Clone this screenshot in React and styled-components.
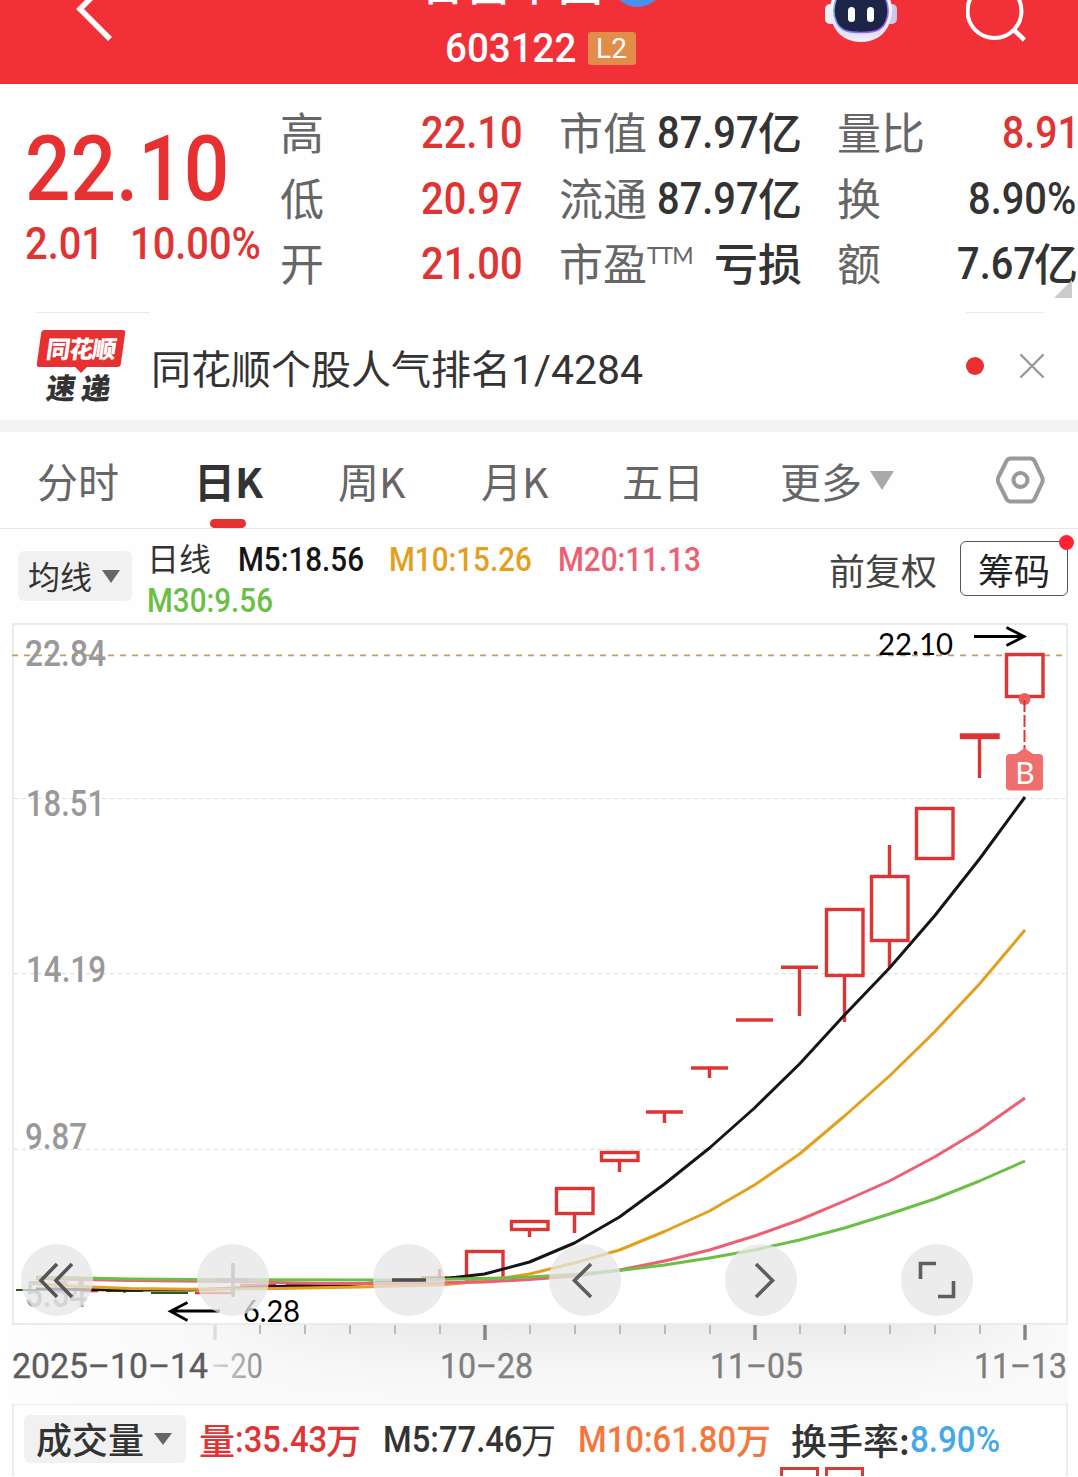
import styled, { createGlobalStyle } from 'styled-components'


const GlobalStyle = createGlobalStyle`
    * {
        box-sizing: border-box;
    }
    body {
        margin: 0;
        background-color: #fefefe;
        font-family: "Noto Sans CJK SC", "Noto Sans", sans-serif;
        color: #333333;
        overflow: hidden;
    }
`

const Page = styled.div`
    width: 1078px;
    height: 1477px;
    overflow: hidden;
`

const Row = styled.div`
    display: flex;
    align-items: center;
`

/* condensed digits: $w is the drawn width, $k the horizontal squeeze */
const Num = styled.span`
    display: block;
    width: ${p => p.$w}px;
    flex: none;
    font-family: Roboto, "Noto Sans", sans-serif;
    font-size: ${p => p.$size || 45}px;
    font-weight: ${p => p.$weight || 500};
    line-height: 1;
    color: ${p => p.$color || '#333333'};
    white-space: nowrap;
    transform: scaleX(${p => p.$k || 0.885});
    transform-origin: left center;
`

const Cn = styled.span`
    display: block;
    font-size: ${p => p.$size || 44}px;
    font-weight: ${p => p.$weight || 400};
    line-height: 1;
    margin-bottom: 3px;
    color: ${p => p.$color || '#666666'};
    white-space: nowrap;
`

/* ---------- header ---------- */

const Header = styled.div`
    height: 84px;
    display: grid;
    grid-template-columns: 424px 232px 1fr;
    background-color: #f23037;
    overflow: hidden;
`

const HeaderLeft = styled.div`
    padding-left: 72px;
`

const HeaderCenter = styled.div`
    display: flex;
    flex-direction: column;
    align-items: center;
`

const TitleRow = styled.div`
    display: flex;
    width: 232px;
    height: 46px;
    margin-top: -41px;
    flex: none;
`

const Title = styled.div`
    font-size: 45px;
    line-height: 46px;
    letter-spacing: 1px;
    margin-left: -4px;
    font-weight: 500;
    color: #ffffff;
    white-space: nowrap;
`

const Verified = styled.div`
    width: 53px;
    height: 53px;
    border-radius: 50%;
    margin: -5px 0 0 7px;
    background-color: #4a90f0;
    flex: none;
`

const CodeRow = styled.div`
    display: flex;
    align-items: center;
    gap: 13px;
    height: 36px;
    margin-top: 25px;
`

const LevelTag = styled.div`
    width: 48px;
    height: 33px;
    border-radius: 3px;
    background-color: #e28d49;
    color: #ffffff;
    font-family: Roboto, sans-serif;
    font-size: 28px;
    line-height: 34px;
    text-align: center;
`

const HeaderRight = styled.div`
    display: flex;
    padding-left: 168px;
    gap: 68px;
`

/* ---------- quote ---------- */

const Quote = styled.div`
    height: 228px;
    display: grid;
    grid-template-columns: 280px 279px 278px 241px;
    position: relative;
`

const PriceBlock = styled.div`
    padding: 41px 0 0 25px;
`

const PriceSub = styled.div`
    display: flex;
    gap: 30px;
    margin-top: 6px;
`

const StatCol = styled.div`
    display: flex;
    flex-direction: column;
    padding: 16px ${p => p.$right}px 0 0;
`

const StatRow = styled.div`
    display: flex;
    align-items: center;
    justify-content: space-between;
    height: 65.6px;
`

const Sup = styled.span`
    font-family: Lato, "Open Sans", sans-serif;
    font-size: 23px;
    line-height: 24px;
    letter-spacing: -1px;
    color: #666666;
    margin: -17px auto 0 0;
`

const Corner = styled.div`
    position: absolute;
    right: 6px;
    bottom: 14px;
    border-left: 18px solid transparent;
    border-bottom: 18px solid #cccccc;
`

/* ---------- news ---------- */

const News = styled.div`
    height: 108px;
    display: flex;
    align-items: flex-start;
    padding: 0 34px 0 36px;
`

const NewsLogo = styled.div`
    width: 114px;
    height: 108px;
    border-top: 1px solid #ebebeb;
    padding: 17px 0 0 1px;
    flex: none;
`

const NewsText = styled.div`
    flex: 1;
    font-size: 40px;
    line-height: 40px;
    padding: 35px 0 0 1px;
    color: #333333;
    white-space: nowrap;
`

const Rank = styled.span`
    font-family: Roboto, sans-serif;
    font-size: 41px;
`

const NewsActions = styled.div`
    width: 78px;
    height: 107px;
    border-top: 1px solid #ebebeb;
    display: flex;
    align-items: center;
    justify-content: space-between;
`

const RedDot = styled.div`
    width: 18px;
    height: 18px;
    border-radius: 50%;
    background-color: #e63031;
`

const LogoTop = styled.div`
    width: 84px;
    height: 37px;
    margin-left: 2px;
    border-radius: 3px;
    background-color: #e63031;
    transform: skewX(-8deg);
    color: #ffffff;
    font-size: 24px;
    font-weight: 900;
    line-height: 36px;
    letter-spacing: -1px;
    text-align: center;
`

const LogoTail = styled.div`
    width: 0;
    margin-left: 38px;
    border: 6px solid transparent;
    border-top-color: #e63031;
    border-bottom: 0;
`

const LogoBottom = styled.div`
    display: flex;
    gap: 6px;
    margin: -3px 0 0 10px;
    font-size: 29px;
    line-height: 32px;
    font-weight: 900;
    transform: skewX(-8deg);
`

const Divider = styled.div`
    height: 12px;
    background-color: #f4f4f4;
`

/* ---------- tabs ---------- */

const Tabs = styled.div`
    height: 97px;
    display: grid;
    grid-template-columns: 157px 144px 143px 141px 158px 216px 1fr;
    padding-left: 37px;
    border-bottom: 1px solid #e6e6e6;
`

const Tab = styled.div`
    display: flex;
    flex-direction: column;
    padding-top: 20px;
    font-size: 41px;
    line-height: 56px;
    font-weight: ${p => (p.$active ? 700 : 400)};
    color: ${p => (p.$active ? '#333333' : '#666666')};
    white-space: nowrap;
`

const TabLine = styled.div`
    width: 36px;
    height: 9px;
    border-radius: 5px;
    margin: 11px 0 0 16px;
    background-color: #e63031;
`

const Caret = styled.i`
    display: block;
    flex: none;
    border-left: ${p => p.$w / 2}px solid transparent;
    border-right: ${p => p.$w / 2}px solid transparent;
    border-top: ${p => p.$h}px solid ${p => p.$color || '#666666'};
`

const SettingCell = styled.div`
    padding-top: 24px;
`

/* ---------- average bar ---------- */

const AvgBar = styled.div`
    height: 94px;
    display: flex;
    align-items: flex-start;
    padding-left: 18px;
`

const Pill = styled.div`
    display: flex;
    align-items: center;
    gap: 10px;
    width: ${p => p.$w}px;
    height: ${p => p.$h}px;
    margin-top: ${p => p.$top}px;
    padding-left: ${p => p.$pad}px;
    border-radius: 6px;
    background-color: #f1f1f1;
    flex: none;
`

const AvgList = styled.div`
    display: flex;
    flex-wrap: wrap;
    align-content: flex-start;
    width: 697px;
    padding: 9px 0 0 15px;
    column-gap: 26.500px;
    flex: none;
`

const AvgItem = styled.div`
    height: 41px;
    display: flex;
    align-items: center;
`

/* keeps the second line of averages off the first one's right side */
const LineBreak = styled.div`
    flex-basis: 100%;
    height: 0;
`

const Adjust = styled.div`
    font-size: 36px;
    line-height: 36px;
    padding-top: 22px;
    width: 131px;
    color: #444444;
    white-space: nowrap;
    flex: none;
`

const ChipButton = styled.div`
    position: relative;
    width: 108px;
    height: 55px;
    margin-top: 12px;
    border: 1px solid #555555;
    border-radius: 6px;
    font-size: 36px;
    line-height: 54px;
    text-align: center;
    color: #222222;
    flex: none;
`

const Badge = styled.div`
    position: absolute;
    right: -7px;
    top: -7px;
    width: 15px;
    height: 15px;
    border-radius: 50%;
    background-color: #ff2435;
`

/* ---------- chart ---------- */

const ChartArea = styled.div`
    position: relative;
    height: 781px;
`

const ChartSvg = styled.svg`
    display: block;
`

const Controls = styled.div`
    position: absolute;
    left: 21px;
    top: 621px;
    display: flex;
    gap: 104px;
`

const RoundButton = styled.div`
    width: 72px;
    height: 72px;
    border-radius: 50%;
    background-color: rgba(230, 230, 230, 0.76);
`

const Volume = styled.div`
    height: 73px;
    margin: -1px 10px 0 12px;
    border: 2px solid #ebebeb;
    border-bottom: none;
    overflow: hidden;
`

const VolumeHead = styled.div`
    display: flex;
    align-items: flex-start;
    height: 62px;
    padding-left: 10px;
`

const VolumeItem = styled.div`
    display: flex;
    align-items: center;
    height: 48px;
    margin-top: 11px;
    width: ${p => p.$w}px;
    flex: none;
`

const VolumeBars = styled.div`
    display: flex;
    gap: 6px;
    padding-left: 766px;
`

const VolumeBar = styled.div`
    width: 39px;
    height: 60px;
    border: 3px solid #d93a3a;
`

const RED = '#df3434'

const candles = [
    { x: 1024.5, top: 654.5, bottom: 696.5 },
    { x: 979.5, top: 735, bottom: 737.5, low: 778 },
    { x: 934.5, top: 808.5, bottom: 858.5 },
    { x: 889.5, top: 876.5, bottom: 940.5, high: 845, low: 968 },
    { x: 844.5, top: 909.5, bottom: 975.5, low: 1022 },
    { x: 799.5, flat: 967.3, low: 1016 },
    { x: 754.5, flat: 1020 },
    { x: 709.5, flat: 1068, low: 1078 },
    { x: 664.5, flat: 1112, low: 1123 },
    { x: 619.5, top: 1152.5, bottom: 1160.5, low: 1172 },
    { x: 574.5, top: 1188.5, bottom: 1213.5, low: 1233 },
    { x: 529.5, top: 1221.5, bottom: 1229.5, low: 1237 },
    { x: 484.5, top: 1251.5, bottom: 1279 },
    { x: 439.5, flat: 1278, high: 1269 },
]

const averages = [
    { color: '#151515', points: '1025,797 979.5,859 934.5,916 889.5,968 844.5,1015 799.5,1064 754.5,1108 709.5,1148 664.5,1184 619.5,1217 574.5,1243 529.5,1262 484.5,1274 450,1278 350,1284.5 260,1287 190,1290 130,1290 36,1289' },
    { color: '#e39f1e', points: '1025,930 979.5,984 934.5,1032 889.5,1076 844.5,1116 799.5,1154 754.5,1185 709.5,1211 664.5,1231.5 619.5,1250 574.5,1263 529.5,1274 484.5,1281 440,1285 360,1287 280,1288.5 190,1289.3 130,1288.5 80,1286.5 36,1284' },
    { color: '#ee5f74', points: '1025,1098 979.5,1130 934.5,1157 889.5,1181 844.5,1201 799.5,1220 754.5,1236 709.5,1250 664.5,1261 619.5,1270 574.5,1276 529.5,1279.5 484.5,1282 400,1283.5 320,1283.5 230,1281.5 130,1280.5 36,1278.5' },
    { color: '#6cbf45', points: '1025,1161 979.5,1181 934.5,1199 889.5,1214 844.5,1228 799.5,1240 754.5,1250 709.5,1258 664.5,1265 619.5,1270.5 574.5,1274.5 529.5,1277 484.5,1278.5 400,1280 220,1279.7 130,1279 36,1277' },
]

const priceLabels = [
    { text: '22.84', x: 25, y: 666, w: 81 },
    { text: '18.51', x: 26, y: 816, w: 79 },
    { text: '14.19', x: 26, y: 982, w: 80 },
    { text: '9.87', x: 25, y: 1149, w: 62 },
    { text: '5.54', x: 25, y: 1307, w: 62 },
]

const dates = [
    { text: '10–28', x: 440, w: 93 },
    { text: '11–05', x: 710, w: 93 },
    { text: '11–13', x: 974, w: 93 },
]

const ticks = []
for (let i = 0; i < 19; i++) {
    ticks.push({ x: 215 + i * 45, major: i % 6 === 0 })
}

const KChart = () => (
    <ChartSvg width="1078" height="781" viewBox="0 623 1078 781">
        <defs>
            <linearGradient id="band" x1="0" y1="0" x2="0" y2="1">
                <stop offset="0" stopColor="#ebebeb" />
                <stop offset="0.5" stopColor="#f5f5f5" />
                <stop offset="1" stopColor="#fafafa" />
            </linearGradient>
            <linearGradient id="fadeLeft" x1="0" y1="0" x2="1" y2="0">
                <stop offset="0" stopColor="#fdfdfd" />
                <stop offset="0.4" stopColor="#fbfbfb" stopOpacity="0.9" />
                <stop offset="1" stopColor="#fafafa" stopOpacity="0" />
            </linearGradient>
            <linearGradient id="fadeRight" x1="1" y1="0" x2="0" y2="0">
                <stop offset="0" stopColor="#fafafa" />
                <stop offset="1" stopColor="#fafafa" stopOpacity="0" />
            </linearGradient>
            <linearGradient id="fadeText" gradientUnits="userSpaceOnUse" x1="210" y1="0" x2="262" y2="0">
                <stop offset="0" stopColor="#dddddd" />
                <stop offset="1" stopColor="#8c8c8c" />
            </linearGradient>
        </defs>

        <rect x="13" y="624" width="1054" height="700" fill="#ffffff" stroke="#ebebeb" strokeWidth="2" />
        <line x1="12" x2="1063" y1="655.3" y2="655.3" stroke="#c49c66" strokeWidth="1.8" strokeDasharray="6 6" />
        {[798.5, 973.7, 1149.3].map(y => (
            <line key={y} x1="14" x2="1065" y1={y} y2={y} stroke="#dedede" strokeWidth="1.2" strokeDasharray="4 4" />
        ))}

        <g fontFamily="Roboto, sans-serif" fontSize="36" fontWeight="500" fill="#999999">
            {priceLabels.map(l => (
                <text key={l.text} x={l.x} y={l.y} textLength={l.w} lengthAdjust="spacingAndGlyphs">{l.text}</text>
            ))}
        </g>

        <g stroke={RED} strokeWidth="3.4" fill="none">
            {candles.map(c => (
                <g key={c.x}>
                    {c.flat
                        ? <line x1={c.x - 18.5} x2={c.x + 18.5} y1={c.flat} y2={c.flat} />
                        : <rect x={c.x - 18} y={c.top} width="36.5" height={c.bottom - c.top} />}
                    {c.low ? <line x1={c.x} x2={c.x} y1={c.flat || c.bottom} y2={c.low} /> : null}
                    {c.high ? <line x1={c.x} x2={c.x} y1={c.high} y2={c.flat || c.top} /> : null}
                </g>
            ))}
            <path d="M82 1291H98M195 1293H235M240 1285H276M286 1284H323" strokeWidth="2.4" />
            <path d="M16 1290H36M106 1291H143M124.500 1290V1293M151 1293H188" stroke="#2d5a16" strokeWidth="2" />
        </g>

        {averages.map(a => (
            <polyline key={a.color} points={a.points} fill="none" stroke={a.color} strokeWidth="3" strokeLinejoin="round" />
        ))}

        <g stroke="#000000" strokeWidth="2.8" fill="none">
            <path d="M974 636.500H1024M1006.500 627.500L1024 636.500L1006.500 645.500" />
            <path d="M220 1311H171M187.500 1302.500L170.500 1311.300L187.500 1320.500" />
        </g>
        <g fontFamily="Lato, sans-serif" fontSize="30" fill="#000000">
            <text x="878" y="655" textLength="75" lengthAdjust="spacingAndGlyphs">22.10</text>
            <text x="243" y="1321.500" textLength="57" lengthAdjust="spacingAndGlyphs">6.28</text>
        </g>

        <circle cx="1024.500" cy="699" r="6" fill="#eb5f60" />
        <line x1="1024.500" x2="1024.500" y1="700" y2="750" stroke={RED} strokeWidth="2" strokeDasharray="12 3" />
        <path d="M1016 754L1024.500 748L1033 754Z" fill="#ef6f6f" />
        <rect x="1006" y="754" width="37" height="36.500" rx="4" fill="#ef6f6f" />
        <text x="1025" y="783.500" textAnchor="middle" fontFamily="Lato, sans-serif" fontSize="30" fill="#ffffff">B</text>

        <rect x="13" y="1325" width="1055" height="79" fill="url(#band)" />
        <rect x="12" y="1325" width="400" height="79" fill="url(#fadeLeft)" />
        <rect x="900" y="1325" width="168" height="79" fill="url(#fadeRight)" />
        {ticks.map(t => (
            <line
                key={t.x}
                x1={t.x}
                x2={t.x}
                y1="1325"
                y2={t.major ? 1340 : 1334}
                stroke={t.x === 215 ? '#dddddd' : t.major ? '#858585' : '#bbbbbb'}
                strokeWidth={t.major ? 3.4 : 2}
            />
        ))}
        <g fontFamily="Roboto, sans-serif" fontSize="35.500" fontWeight="400" strokeWidth="0.4">
            <text x="12" y="1378" fill="#5c5c5c" stroke="#5c5c5c" textLength="196" lengthAdjust="spacingAndGlyphs">2025–10–14</text>
            <text x="211" y="1378" fill="url(#fadeText)" textLength="52" lengthAdjust="spacingAndGlyphs">–20</text>
            {dates.map(d => (
                <text key={d.text} x={d.x} y="1378" fill="#7f7f7f" stroke="#7f7f7f" textLength={d.w} lengthAdjust="spacingAndGlyphs">{d.text}</text>
            ))}
        </g>
    </ChartSvg>
)

const controlPaths = [
    { d: 'M36 20L20 36.500L36 53M51 20L35 36.500L51 53', color: '#555555' },
    { d: 'M36 19V53M19 36H53', color: '#cfcfcf' },
    { d: 'M19 36H53', color: '#4b4f49' },
    { d: 'M42 20L25.500 36.500L42 53', color: '#5e5e5e' },
    { d: 'M31 20L47.500 36.500L31 53', color: '#5e5e5e' },
    { d: 'M35 19.500H19.500V35M37 52.500H52.500V37', color: '#5e5e5e' },
]

export default function App() {
    return (
        <Page>
            <GlobalStyle />
            <Header>
                <HeaderLeft>
                    <svg width="50" height="50" viewBox="72 0 50 50">
                        <path d="M111 -22L80 9L110 39" fill="none" stroke="#ffffff" strokeWidth="5.500" />
                    </svg>
                </HeaderLeft>
                <HeaderCenter>
                    <TitleRow>
                        <Title>合富中国</Title>
                        <Verified />
                    </TitleRow>
                    <CodeRow>
                        <Num $w={130} $size={41} $k={0.94} $color="#ffffff">603122</Num>
                        <LevelTag>L2</LevelTag>
                    </CodeRow>
                </HeaderCenter>
                <HeaderRight>
                    <svg width="74" height="48" viewBox="824 0 74 48">
                        <defs>
                            <linearGradient id="shell" x1="0" y1="0" x2="0" y2="1">
                                <stop offset="0" stopColor="#ffffff" />
                                <stop offset="0.85" stopColor="#e4e1f5" />
                                <stop offset="1" stopColor="#f6f5fc" />
                            </linearGradient>
                            <linearGradient id="rim" x1="0" y1="0" x2="1" y2="1">
                                <stop offset="0" stopColor="#6cc3f5" />
                                <stop offset="1" stopColor="#9a4df0" />
                            </linearGradient>
                        </defs>
                        <rect x="825" y="4" width="12" height="20" rx="5" fill="#f0effa" />
                        <rect x="885" y="4" width="12" height="20" rx="5" fill="#cdc9ee" />
                        <path d="M836 -8C828 4 829 14 832 22C837 36 848 42 861 42S885 36 890 22C893 14 894 4 886 -8Z" fill="url(#shell)" />
                        <path d="M838 -5C833 5 833 14 836 21C840 31 848 32.500 861 32.500S882 31 886 21C889 14 889 5 884 -5Z" fill="#1d2446" stroke="url(#rim)" strokeWidth="1.600" />
                        <rect x="848" y="7" width="7" height="15" rx="3.500" fill="#ffffff" />
                        <rect x="867" y="7" width="7" height="15" rx="3.500" fill="#ffffff" />
                    </svg>
                    <svg width="62" height="48" viewBox="966 0 62 48">
                        <circle cx="994.500" cy="11" r="27" fill="none" stroke="#ffffff" strokeWidth="4" />
                        <path d="M1013 29L1024.500 40" stroke="#ffffff" strokeWidth="4.600" />
                    </svg>
                </HeaderRight>
            </Header>

            <Quote>
                <PriceBlock>
                    <Num $w={199} $size={90} $k={0.89} $color="#e63031">22.10</Num>
                    <PriceSub>
                        <Num $w={75} $color="#df3434">2.01</Num>
                        <Num $w={130} $color="#df3434">10.00%</Num>
                    </PriceSub>
                </PriceBlock>
                <StatCol $right={37}>
                    <StatRow><Cn>高</Cn><Num $w={101} $color={RED}>22.10</Num></StatRow>
                    <StatRow><Cn>低</Cn><Num $w={101} $color={RED}>20.97</Num></StatRow>
                    <StatRow><Cn>开</Cn><Num $w={101} $color={RED}>21.00</Num></StatRow>
                </StatCol>
                <StatCol $right={35}>
                    <StatRow><Cn>市值</Cn><Row><Num $w={101}>87.97</Num><Cn $weight={500} $color="#333333">亿</Cn></Row></StatRow>
                    <StatRow><Cn>流通</Cn><Row><Num $w={101}>87.97</Num><Cn $weight={500} $color="#333333">亿</Cn></Row></StatRow>
                    <StatRow><Cn>市盈</Cn><Sup>TTM</Sup><Cn $weight={500} $color="#333333">亏损</Cn></StatRow>
                </StatCol>
                <StatCol $right={0}>
                    <StatRow><Cn>量比</Cn><Num $w={76} $k={0.87} $color={RED}>8.91</Num></StatRow>
                    <StatRow><Cn>换</Cn><Num $w={110}>8.90%</Num></StatRow>
                    <StatRow><Cn>额</Cn><Row><Num $w={77}>7.67</Num><Cn $weight={500} $color="#333333">亿</Cn></Row></StatRow>
                </StatCol>
                <Corner />
            </Quote>

            <News>
                <NewsLogo>
                    <LogoTop>同花顺</LogoTop>
                    <LogoTail />
                    <LogoBottom><span>速</span><span>递</span></LogoBottom>
                </NewsLogo>
                <NewsText>同花顺个股人气排名<Rank>1/4284</Rank></NewsText>
                <NewsActions>
                    <RedDot />
                    <svg width="24" height="24" viewBox="0 0 24 24">
                        <path d="M1 1L23 23M23 1L1 23" stroke="#999999" strokeWidth="2.400" strokeLinecap="round" />
                    </svg>
                </NewsActions>
            </News>
            <Divider />

            <Tabs>
                <Tab>分时</Tab>
                <Tab $active>日K<TabLine /></Tab>
                <Tab>周K</Tab>
                <Tab>月K</Tab>
                <Tab>五日</Tab>
                <Tab><Row>更多<Caret $w={24} $h={19} $color="#a9a9a9" style={{ marginLeft: 8 }} /></Row></Tab>
                <SettingCell>
                    <svg width="50" height="48" viewBox="0 0 50 48">
                        <path d="M14.500 2.500H34.500Q37 2.500 38.500 5L46 21Q47.500 24 46 27L38.500 43Q37 45.500 34.500 45.500H14.500Q12 45.500 10.500 43L2.500 27Q1 24 2.500 21L10.500 5Q12 2.500 14.500 2.500Z" fill="none" stroke="#999999" strokeWidth="4" />
                        <circle cx="24.500" cy="24" r="7" fill="none" stroke="#999999" strokeWidth="4" />
                    </svg>
                </SettingCell>
            </Tabs>

            <AvgBar>
                <Pill $w={114} $h={50} $top={22} $pad={10}>
                    <Cn $size={32} $color="#333333">均线</Cn>
                    <Caret $w={19} $h={13} />
                </Pill>
                <AvgList>
                    <AvgItem><Cn $size={32} $color="#333333">日线</Cn></AvgItem>
                    <AvgItem><Num $w={125} $size={34} $k={0.87} $color="#151515">M5:18.56</Num></AvgItem>
                    <AvgItem><Num $w={142} $size={34} $k={0.87} $color="#e39f1e">M10:15.26</Num></AvgItem>
                    <AvgItem><Num $w={143} $size={34} $k={0.87} $color="#ee5f74">M20:11.13</Num></AvgItem>
                    <LineBreak />
                    <AvgItem><Num $w={125} $size={34} $k={0.87} $color="#6cbf45">M30:9.56</Num></AvgItem>
                </AvgList>
                <Adjust>前复权</Adjust>
                <ChipButton>筹码<Badge /></ChipButton>
            </AvgBar>

            <ChartArea>
                <KChart />
                <Controls>
                    {controlPaths.map(c => (
                        <RoundButton key={c.d}>
                            <svg width="72" height="72" viewBox="0 0 72 72">
                                <path d={c.d} fill="none" stroke={c.color} strokeWidth="3.600" />
                            </svg>
                        </RoundButton>
                    ))}
                </Controls>
            </ChartArea>

            <Volume>
                <VolumeHead>
                    <Pill $w={162} $h={48} $top={10} $pad={12}>
                        <Cn $size={36} $weight={500} $color="#333333">成交量</Cn>
                        <Caret $w={19} $h={12} />
                    </Pill>
                    <VolumeItem $w={184} style={{ marginLeft: 13 }}>
                        <Cn $size={36} $weight={500} $color={RED}>量</Cn>
                        <Num $w={91} $size={36} $k={0.91} $color={RED}>:35.43</Num>
                        <Cn $size={35} $weight={500} $color={RED}>万</Cn>
                    </VolumeItem>
                    <VolumeItem $w={195}>
                        <Num $w={138} $size={36} $k={0.91}>M5:77.46</Num>
                        <Cn $size={35} $weight={400} $color="#333333">万</Cn>
                    </VolumeItem>
                    <VolumeItem $w={213}>
                        <Num $w={158} $size={36} $k={0.91} $color="#f5763c">M10:61.80</Num>
                        <Cn $size={35} $weight={500} $color="#f5763c">万</Cn>
                    </VolumeItem>
                    <VolumeItem $w={220}>
                        <Cn $size={36} $weight={500} $color="#333333">换手率:</Cn>
                        <Num $w={90} $size={36} $k={0.92} $color="#45a8e8">8.90%</Num>
                    </VolumeItem>
                </VolumeHead>
                <VolumeBars>
                    <VolumeBar />
                    <VolumeBar />
                </VolumeBars>
            </Volume>
        </Page>
    )
}
